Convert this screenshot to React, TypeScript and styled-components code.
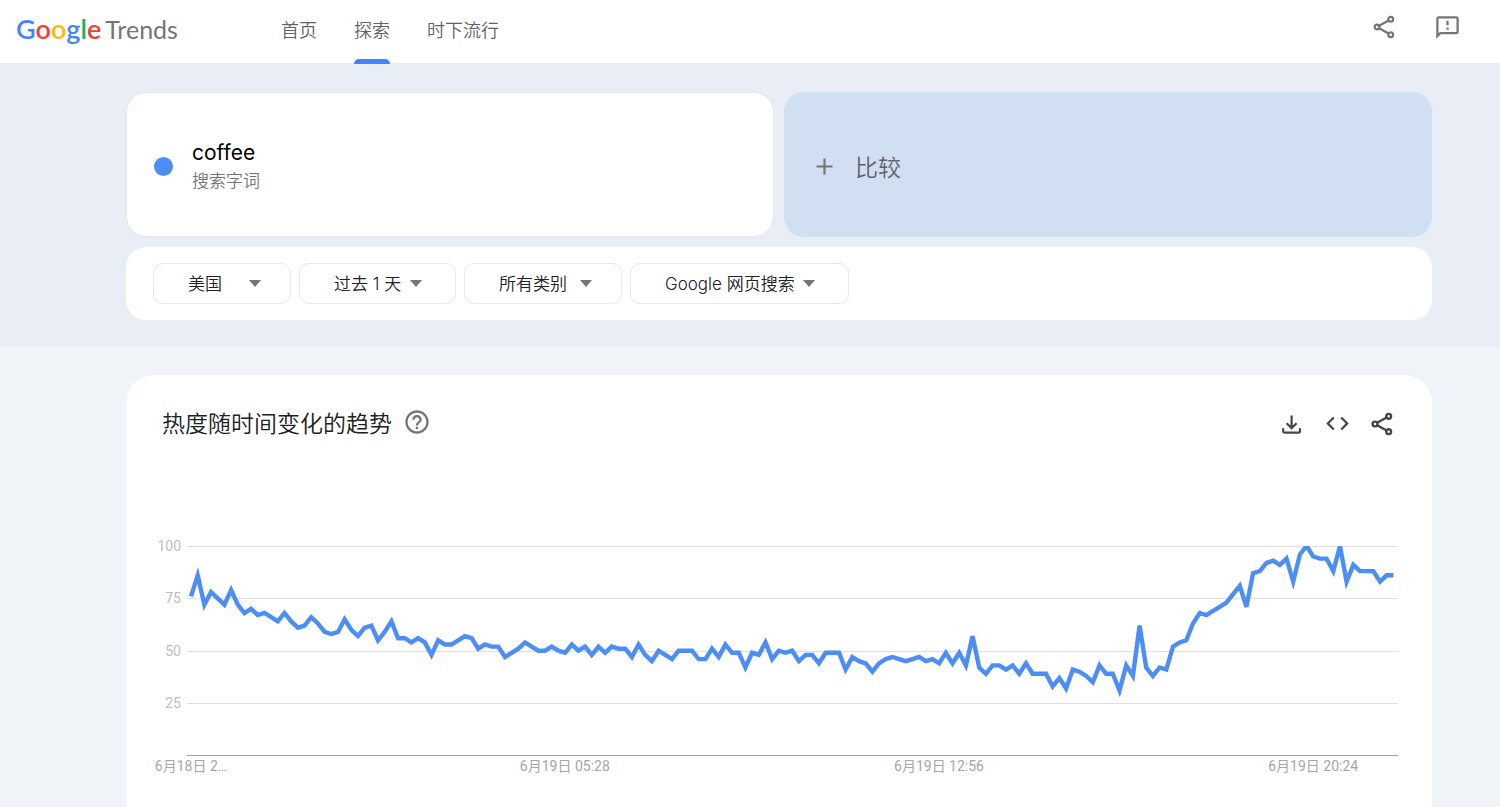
import React from 'react';
import styled, { createGlobalStyle } from 'styled-components';
import { MdCode, MdHelpOutline, MdOutlineFeedback } from 'react-icons/md';

const cjk = `"Noto Sans CJK SC", sans-serif`;

const GlobalStyle = createGlobalStyle`
  *, *::before, *::after { box-sizing: border-box; }
  body {
    margin: 0;
    background: #f0f3f8;
    font-family: Inter, ${cjk};
    color: #202124;
  }
  button, select { font: inherit; color: inherit; }
`;

const Page = styled.div`
  display: flex;
  flex-direction: column;
  min-height: 100vh;
`;

const Header = styled.header`
  display: flex;
  align-items: center;
  height: 63px;
  padding: 0 39px 0 16px;
  background: #fff;
`;

const Logo = styled.a`
  display: flex;
  align-items: baseline;
  gap: 4px;
  width: 265px;
  padding-bottom: 6px;
  text-decoration: none;
  font-family: Lato, sans-serif;
  line-height: 32px;
`;

const LogoBrand = styled.span`
  font-size: 27px;
  font-weight: 600;
`;

const LogoLetter = styled.span<{ $color: string }>`
  color: ${(p) => p.$color};
`;

const LogoProduct = styled.span`
  font-size: 25px;
  color: #757575;
`;

const Nav = styled.nav`
  display: flex;
  flex: 1;
  gap: 37px;
`;

const NavLink = styled.a<{ $active?: boolean }>`
  position: relative;
  height: 63px;
  font-size: 18px;
  line-height: 58px;
  font-family: ${cjk};
  font-weight: 350;
  color: #5f6368;
  text-decoration: none;
  &::after {
    content: '';
    display: ${(p) => (p.$active ? 'block' : 'none')};
    position: absolute;
    left: 0;
    right: 0;
    bottom: -1px;
    height: 5px;
    border-radius: 5px 5px 0 0;
    background: #4285f4;
  }
`;

const HeaderActions = styled.div`
  display: flex;
  gap: 35px;
  padding-bottom: 9px;
`;

const IconButton = styled.button`
  display: flex;
  align-items: center;
  justify-content: center;
  width: 28px;
  height: 28px;
  padding: 0;
  border: 0;
  background: none;
  color: inherit;
  cursor: pointer;
`;

const HeaderIconButton = styled(IconButton)`
  color: #757575;
`;

const Hero = styled.section`
  display: flex;
  flex-direction: column;
  gap: 10px;
  padding: 29px 68px 27px 126px;
  background: #e8edf6;
`;

const Terms = styled.div`
  display: grid;
  grid-template-columns: 1fr 1fr;
  gap: 10px;
`;

const TermCard = styled.div`
  display: flex;
  align-items: center;
  gap: 19px;
  height: 145px;
  padding: 4px 27px 0;
  border: 1px solid #e3e6ea;
  border-radius: 20px;
  background: #fff;
`;

const Dot = styled.span`
  width: 19px;
  height: 19px;
  border-radius: 50%;
  background: #4c8df6;
`;

const TermText = styled.div`
  display: flex;
  flex-direction: column;
  padding-bottom: 2px;
`;

const TermName = styled.span`
  font-size: 21px;
  line-height: 28px;
  color: #000;
`;

const TermKind = styled.span`
  font-family: ${cjk};
  font-size: 17px;
  font-weight: 350;
  line-height: 26px;
  color: #757575;
`;

const CompareButton = styled.button`
  display: flex;
  align-items: center;
  gap: 17px;
  height: 145px;
  padding: 2px 26px 0;
  border: 0;
  border-radius: 20px;
  background: #d0dff2;
  font-family: ${cjk};
  font-size: 23px;
  font-weight: 350;
  color: #5f6368;
  cursor: pointer;
`;

const Filters = styled.div`
  display: flex;
  gap: 8px;
  padding: 16px 27px;
  border-radius: 20px;
  background: #fff;
`;

const FilterBox = styled.label<{ $width: number }>`
  display: grid;
  align-items: center;
  width: ${(p) => p.$width}px;
`;

const FilterSelect = styled.select`
  grid-area: 1 / 1;
  width: 100%;
  height: 41px;
  padding: 0 0 0 34px;
  appearance: none;
  border: 1px solid #e8e8e8;
  border-radius: 10px;
  background: #fff;
  font-size: 17px;
  font-weight: 350;
  color: #202124;
  cursor: pointer;
`;

const Caret = styled.svg<{ $inset: number }>`
  grid-area: 1 / 1;
  justify-self: end;
  width: 12px;
  height: 7px;
  margin-right: ${(p) => p.$inset}px;
  fill: #757575;
  pointer-events: none;
`;

const Main = styled.main`
  display: flex;
  flex: 1;
  padding: 28px 68px 0 126px;
`;

const ChartCard = styled.section`
  flex: 1;
  min-width: 0;
  padding: 31px 34px 24px 24px;
  border-radius: 28px 28px 0 0;
  background: #fff;
`;

const CardHeader = styled.div`
  display: flex;
  align-items: center;
  justify-content: space-between;
  padding: 0 2px 0 12px;
`;

const TitleGroup = styled.div`
  display: flex;
  align-items: center;
  gap: 11px;
  padding-bottom: 3px;
`;

const Title = styled.h2`
  margin: 0;
  font-family: ${cjk};
  font-size: 23px;
  font-weight: 350;
  line-height: 32px;
`;

const HelpButton = styled(IconButton)`
  color: #757575;
`;

const CardActions = styled.div`
  display: flex;
  gap: 17px;
  color: #444746;
`;

const Chart = styled.div`
  display: grid;
  grid-template-columns: 31px 1fr;
  column-gap: 6px;
  margin-top: 105px;
`;

const AxisLabels = styled.svg`
  display: block;
  width: 100%;
  overflow: visible;
  font-family: Roboto, "Noto Sans CJK SC", sans-serif;
`;

const YAxis = styled(AxisLabels)`
  height: 211px;
  font-size: 14px;
  fill: #bdbdbd;
`;

const XAxis = styled(AxisLabels)`
  grid-column: 2;
  height: 24px;
  font-size: 14px;
  fill: #a6a6a6;
`;

const Plot = styled.svg`
  display: block;
  width: 100%;
  height: 211px;
`;

const ShareIcon = ({ weight }: { weight: number }) => (
  <svg width="28" height="28" viewBox="0 0 28 28" fill="none" stroke="currentColor" strokeWidth={weight} aria-hidden="true">
    <circle cx="20.7" cy="6.3" r="2.4" />
    <circle cx="7" cy="14" r="2.4" />
    <circle cx="20.7" cy="21.7" r="2.4" />
    <path d="M9.1 12.8 18.6 7.5M9.1 15.2 18.6 20.5" />
  </svg>
);

const DownloadIcon = () => (
  <svg width="28" height="28" viewBox="0 0 28 28" fill="none" stroke="currentColor" strokeWidth="2.2" aria-hidden="true">
    <path d="M13.6 5.5V18M8.6 13.2 13.6 18.1 18.6 13.2" />
    <path d="M5.2 18.2V21.6Q5.2 22.6 6.2 22.6H21Q22 22.6 22 21.6V18.2" />
  </svg>
);

const PlusIcon = () => (
  <svg width="28" height="28" viewBox="0 0 28 28" fill="none" stroke="#757575" strokeWidth="2.2" aria-hidden="true">
    <path d="M14.5 6.5V22.5M6.5 14.5H22.5" />
  </svg>
);

const brand: [string, string][] = [
  ['G', '#4285f4'],
  ['o', '#ea4335'],
  ['o', '#fbbc05'],
  ['g', '#4285f4'],
  ['l', '#34a853'],
  ['e', '#ea4335'],
];

const filters = [
  { name: '地区', value: '美国', width: 138, inset: 30 },
  { name: '时间范围', value: '过去 1 天', width: 157, inset: 34 },
  { name: '类别', value: '所有类别', width: 158, inset: 30 },
  { name: '搜索类型', value: 'Google 网页搜索', width: 219, inset: 34 },
];

/* One sample every eight minutes over a day. */
const series = [
  76, 86, 72, 78, 75, 72, 79, 72, 68, 70, 67, 68, 66, 64, 68, 64, 61, 62, 66, 63,
  59, 58, 59, 65, 60, 57, 61, 62, 55, 59, 64, 56, 56, 54, 56, 54, 48, 55, 53, 53,
  55, 57, 56, 51, 53, 52, 52, 47, 49, 51, 54, 52, 50, 50, 52, 50, 49, 53, 50, 52,
  48, 52, 49, 52, 51, 51, 47, 53, 48, 45, 50, 48, 46, 50, 50, 50, 46, 46, 51, 47,
  53, 49, 49, 42, 49, 48, 54, 46, 50, 49, 50, 45, 48, 48, 44, 49, 49, 49, 41, 47,
  45, 44, 40, 44, 46, 47, 46, 45, 46, 47, 45, 46, 44, 49, 44, 49, 43, 57, 42, 39,
  43, 43, 41, 43, 39, 44, 39, 39, 39, 33, 37, 32, 41, 40, 38, 35, 43, 39, 39, 31,
  43, 38, 62, 42, 38, 42, 41, 52, 54, 55, 63, 68, 67, 69, 71, 73, 77, 81, 71, 87,
  88, 92, 93, 91, 94, 83, 96, 100, 95, 94, 94, 88, 100, 83, 91, 88, 88, 88, 83, 86,
  86,
];

const levels = [100, 75, 50, 25];
const yOf = (value: number) => 209.5 - value * 2.095;
const linePoints = series.map((v, i) => `${(4 + i * 6.68).toFixed(1)},${yOf(v).toFixed(1)}`).join(' ');

const ticks = [
  { x: '0.33%', label: '6月18日 2…' },
  { x: '31.2%', label: '6月19日 05:28' },
  { x: '62.1%', label: '6月19日 12:56' },
  { x: '93%', label: '6月19日 20:24' },
];

export default function App() {
  return (
    <Page>
      <GlobalStyle />
      <Header>
        <Logo href="#" aria-label="Google Trends">
          <LogoBrand>
            {brand.map(([letter, color], i) => (
              <LogoLetter key={i} $color={color}>{letter}</LogoLetter>
            ))}
          </LogoBrand>
          <LogoProduct>Trends</LogoProduct>
        </Logo>
        <Nav>
          <NavLink href="#">首页</NavLink>
          <NavLink href="#" $active aria-current="page">探索</NavLink>
          <NavLink href="#">时下流行</NavLink>
        </Nav>
        <HeaderActions>
          <HeaderIconButton aria-label="分享"><ShareIcon weight={2.2} /></HeaderIconButton>
          <HeaderIconButton aria-label="发送反馈"><MdOutlineFeedback size={27} /></HeaderIconButton>
        </HeaderActions>
      </Header>

      <Hero>
        <Terms>
          <TermCard>
            <Dot />
            <TermText>
              <TermName>coffee</TermName>
              <TermKind>搜索字词</TermKind>
            </TermText>
          </TermCard>
          <CompareButton>
            <PlusIcon />
            比较
          </CompareButton>
        </Terms>
        <Filters>
          {filters.map((f) => (
            <FilterBox key={f.name} $width={f.width}>
              <FilterSelect aria-label={f.name} defaultValue={f.value}>
                <option>{f.value}</option>
              </FilterSelect>
              <Caret $inset={f.inset} viewBox="0 0 12 7" aria-hidden="true">
                <path d="M0 0H12L6 7Z" />
              </Caret>
            </FilterBox>
          ))}
        </Filters>
      </Hero>

      <Main>
        <ChartCard>
          <CardHeader>
            <TitleGroup>
              <Title>热度随时间变化的趋势</Title>
              <HelpButton aria-label="帮助"><MdHelpOutline size={28} /></HelpButton>
            </TitleGroup>
            <CardActions>
              <IconButton aria-label="下载"><DownloadIcon /></IconButton>
              <IconButton aria-label="嵌入"><MdCode size={27} /></IconButton>
              <IconButton aria-label="分享图表"><ShareIcon weight={2.4} /></IconButton>
            </CardActions>
          </CardHeader>
          <Chart>
            <YAxis>
              {levels.map((level) => (
                <text key={level} x="100%" y={Math.round(yOf(level)) + 5} textAnchor="end">{level}</text>
              ))}
            </YAxis>
            <Plot viewBox="0 0 1211 211" preserveAspectRatio="none" role="img" aria-label="热度随时间变化的趋势">
              {levels.map((level) => (
                <line key={level} x1="0" x2="1211" y1={Math.round(yOf(level)) + 0.5} y2={Math.round(yOf(level)) + 0.5} stroke="#e0e0e0" vectorEffect="non-scaling-stroke" />
              ))}
              <line x1="0" x2="1211" y1="209.5" y2="209.5" stroke="#a3a3a3" vectorEffect="non-scaling-stroke" />
              <polyline points={linePoints} fill="none" stroke="#4c8df6" strokeWidth="4.4" strokeMiterlimit="4" vectorEffect="non-scaling-stroke" />
            </Plot>
            <XAxis>
              {ticks.map((t) => (
                <text key={t.x} x={t.x} y="14" textAnchor="middle">{t.label}</text>
              ))}
            </XAxis>
          </Chart>
        </ChartCard>
      </Main>
    </Page>
  );
}
